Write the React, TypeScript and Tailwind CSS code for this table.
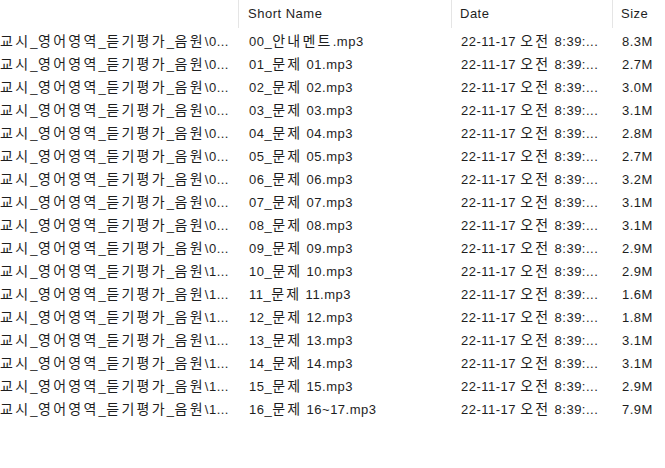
import React from "react";

const rows = [
  ["0", "00_안내멘트.mp3", "8.3M"],
  ["0", "01_문제 01.mp3", "2.7M"],
  ["0", "02_문제 02.mp3", "3.0M"],
  ["0", "03_문제 03.mp3", "3.1M"],
  ["0", "04_문제 04.mp3", "2.8M"],
  ["0", "05_문제 05.mp3", "2.7M"],
  ["0", "06_문제 06.mp3", "3.2M"],
  ["0", "07_문제 07.mp3", "3.1M"],
  ["0", "08_문제 08.mp3", "3.1M"],
  ["0", "09_문제 09.mp3", "2.9M"],
  ["1", "10_문제 10.mp3", "2.9M"],
  ["1", "11_문제 11.mp3", "1.6M"],
  ["1", "12_문제 12.mp3", "1.8M"],
  ["1", "13_문제 13.mp3", "3.1M"],
  ["1", "14_문제 14.mp3", "3.1M"],
  ["1", "15_문제 15.mp3", "2.9M"],
  ["1", "16_문제 16~17.mp3", "7.9M"],
];

function T({ text }: { text: string }) {
  const parts = text.split(/([가-힣]+)/);
  return (
    <>
      {parts.map((p, i) =>
        /[가-힣]/.test(p) ? (
          <span key={i} className="text-[14px] tracking-[2.25px]">
            {p}
          </span>
        ) : (
          <span key={i}>{p}</span>
        )
      )}
    </>
  );
}

export default function App() {
  return (
    <div
      className="w-[665px] h-[468px] bg-white overflow-hidden text-[13px] tracking-[0.5px] text-[#1e1e1e]"
      style={{ fontFamily: '"Liberation Sans", "Noto Sans CJK KR", sans-serif' }}
    >
      <div className="grid grid-cols-[239px_213px_161px_52px] h-[28px] items-center">
        <div className="h-full border-r border-[#e5e5e5]" />
        <div className="h-full border-r border-[#e5e5e5] pl-[9px] flex items-center">Short Name</div>
        <div className="h-full border-r border-[#e5e5e5] pl-[8px] flex items-center">Date</div>
        <div className="h-full pl-[8px] flex items-center">Size</div>
      </div>
      <div className="pt-[2px]">
        {rows.map(([d, name, size], i) => (
          <div key={i} className="grid grid-cols-[239px_213px_161px_52px] h-[23px] items-center whitespace-nowrap">
            <div>
              <T text={`교시_영어영역_듣기평가_음원\\${d}...`} />
            </div>
            <div className="pl-[10px]">
              <T text={name} />
            </div>
            <div className="pl-[9px]">
              <T text="22-11-17 오전 8:39:..." />
            </div>
            <div className="pl-[9px]">{size}</div>
          </div>
        ))}
      </div>
    </div>
  );
}
